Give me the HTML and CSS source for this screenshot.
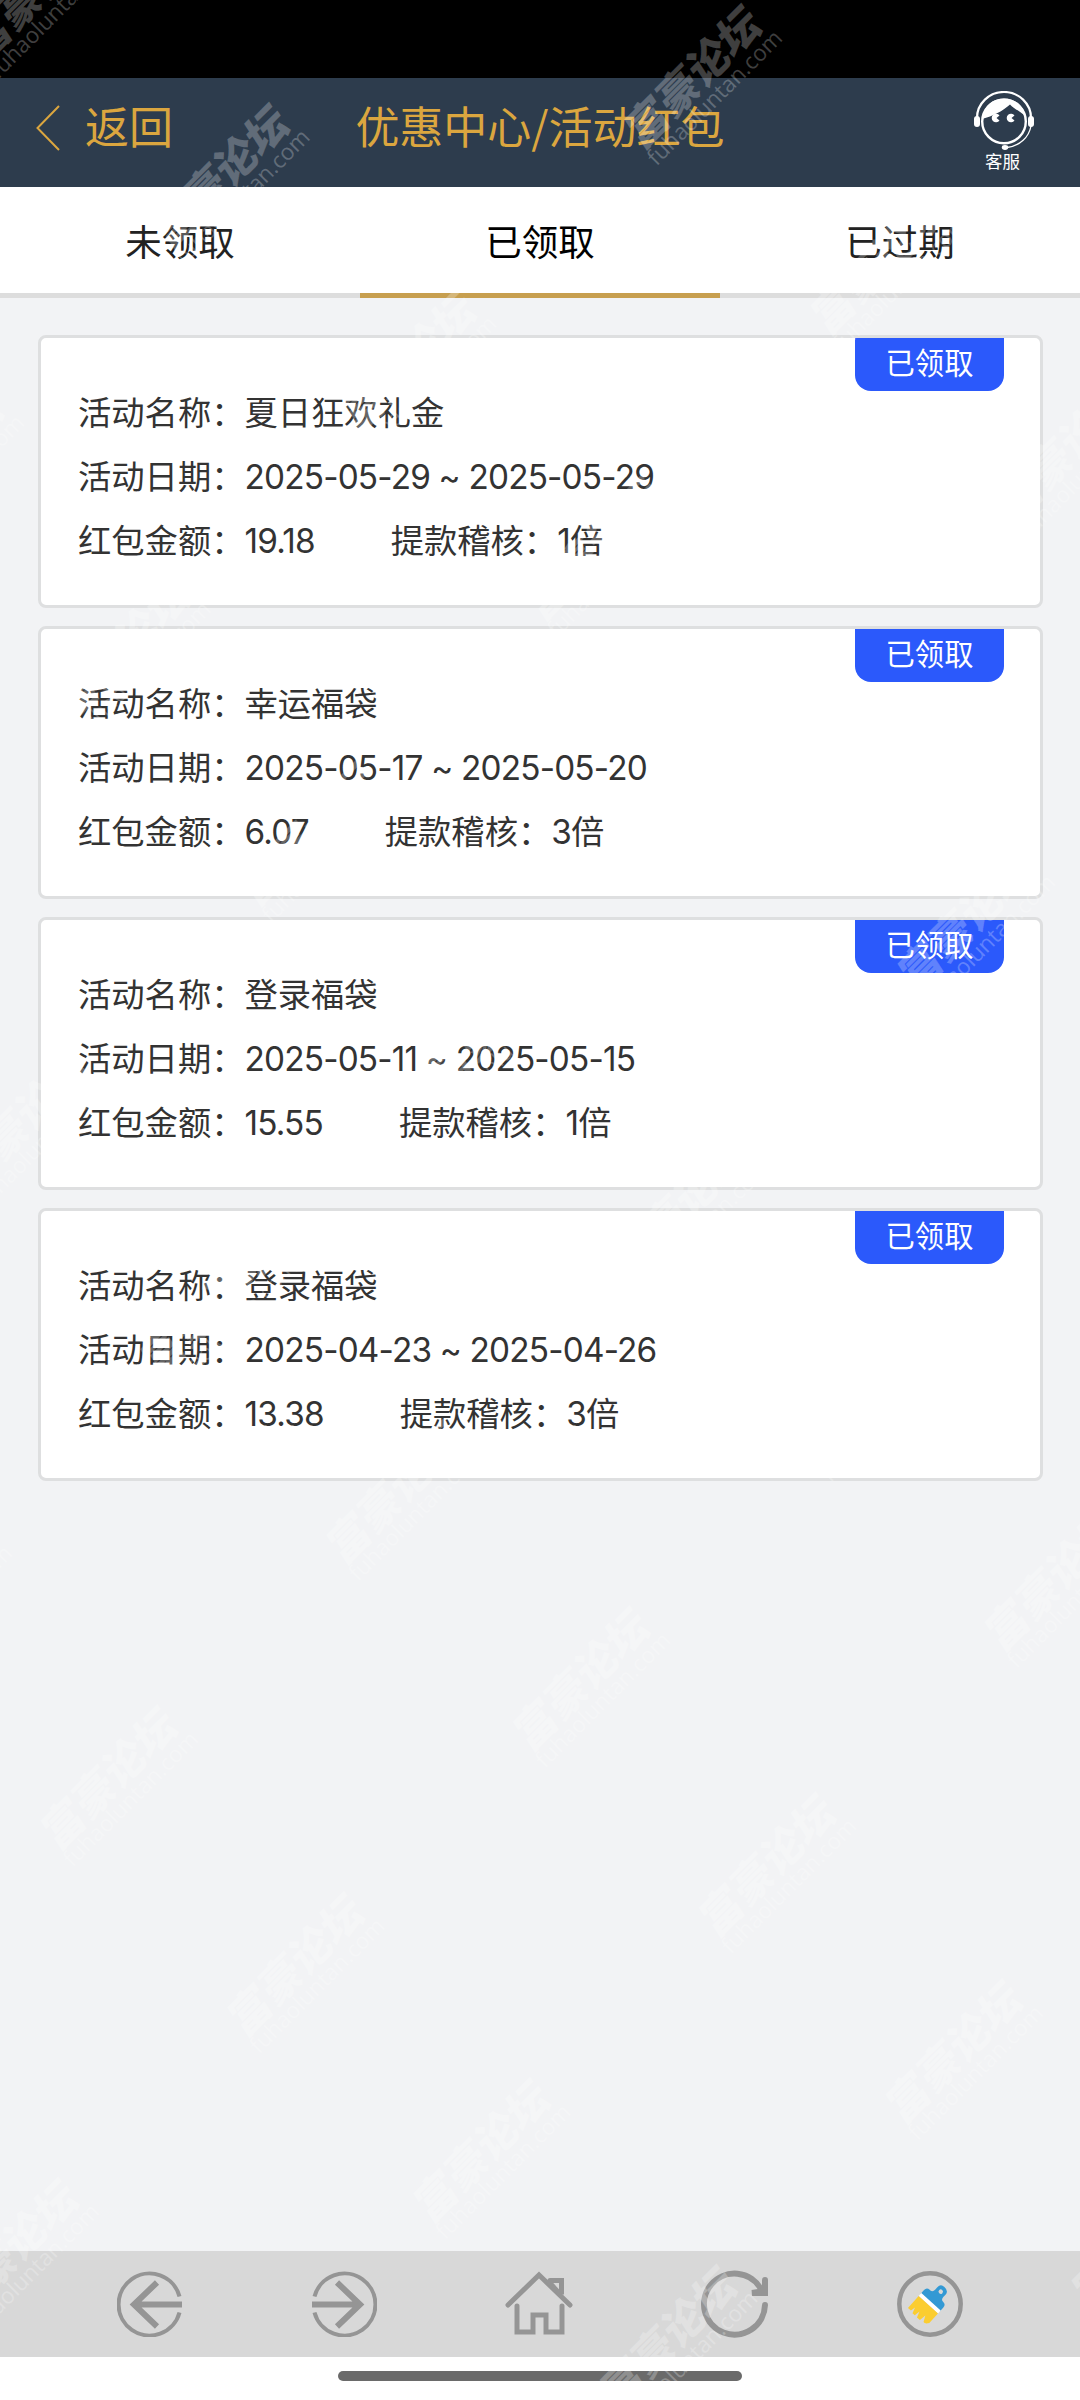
FILE: index.html
```
<!DOCTYPE html>
<html lang="zh-CN">
<head>
    <meta charset="UTF-8">
    <meta name="viewport" content="width=device-width, initial-scale=1.0">
    <title>优惠中心/活动红包</title>
    <link rel="stylesheet" href="styles.css">
</head>
<body>

<div class="status-bar"></div>

<header class="header">
    <a class="back">
        <svg width="24" height="46" viewBox="0 0 24 46"><path d="M23 1 L1.5 23 L23 45" fill="none" stroke="currentColor" stroke-width="2"/></svg>
        <span>返回</span>
    </a>
    <h1>优惠中心/活动红包</h1>
    <a class="service">
        <svg width="60" height="60" viewBox="0 0 60 60">
            <path d="M3 27 A27 26 0 0 1 57 27" fill="none" stroke="#fff" stroke-width="2.2"/>
            <rect x="0" y="25" width="6" height="11" rx="3" fill="#fff"/>
            <rect x="54" y="25" width="6" height="11" rx="3" fill="#fff"/>
            <circle cx="30" cy="30.5" r="21.8" fill="none" stroke="#fff" stroke-width="2.4"/>
            <path d="M8 28 C10 14 19 7.5 30 7.5 C41 7.5 49 14 52 26 C46 20 40 18 36 13.5 C29 20 19 25 8 28 Z" fill="#fff"/>
            <path d="M25.5 24.5 A4.3 4.3 0 1 0 25.5 29.5 L22.5 27 Z" fill="#fff"/>
            <path d="M40.5 24.5 A4.3 4.3 0 1 0 40.5 29.5 L37.5 27 Z" fill="#fff"/>
            <path d="M57 35 C55 46 46 55 33 56.5" fill="none" stroke="#fff" stroke-width="1.3"/>
            <ellipse cx="31" cy="56.5" rx="3.2" ry="2.4" fill="#fff"/>
        </svg>
        <span>客服</span>
    </a>
</header>

<nav class="tabs">
    <a class="tab">未领取</a>
    <a class="tab active">已领取</a>
    <a class="tab">已过期</a>
</nav>

<main class="list" id="list"></main>

<footer class="toolbar">
    <svg width="66" height="66" viewBox="0 0 66 66" fill="none" stroke="#959595">
        <path d="M62.5 25.5 A31 31 0 1 0 62.5 41.5" stroke-width="4"/>
        <path d="M65 33.5 H18 M40 11.5 L17 33.5 L40 55.5" stroke-width="6"/>
    </svg>
    <svg width="66" height="66" viewBox="0 0 66 66" fill="none" stroke="#959595">
        <path d="M3.5 25.5 A31 31 0 1 1 3.5 41.5" stroke-width="4"/>
        <path d="M1 33.5 H48 M26 11.5 L49 33.5 L26 55.5" stroke-width="6"/>
    </svg>
    <svg width="68" height="66" viewBox="0 0 68 66" fill="none" stroke="#959595" stroke-width="5" stroke-linecap="round">
        <path d="M3 34 L34 4 L65 34"/>
        <path d="M12 35 V61 H28 V44 H41 V61 H57 V35"/>
        <path d="M45 9.5 H56.5 V21 H53 L44 11"/>
    </svg>
    <svg width="68" height="68" viewBox="0 0 68 68" fill="none" stroke="#959595" stroke-width="6" stroke-linecap="round">
        <path d="M64 35 A30.5 30.5 0 1 1 60 19"/>
        <path d="M64 10 V23 H51 L64 21"/>
    </svg>
    <svg width="66" height="68" viewBox="0 0 66 68">
        <circle cx="33" cy="34" r="30.7" fill="none" stroke="#959595" stroke-width="4.5"/>
        <g transform="translate(32 34) rotate(42)">
            <path d="M-13 -2 V-7 Q-13 -11 -9 -11 H-8 Q-5 -11 -5 -15 V-18 Q-5 -23 0 -23 Q6 -23 6 -18 V-15 Q6 -11 9 -11 Q13 -11 13 -7 V-2 Z" fill="#3399d4"/>
            <rect x="-13" y="-3" width="26" height="4" fill="#fff"/>
            <path d="M-13 1 H13 V14 Q10 18 8 17 L5 11 L4 18 H0 L-2 12 L-3 18 H-6 L-8 12 L-9 17 H-13 Z" fill="#fbcd30"/>
            <circle cx="0.5" cy="-17" r="2.2" fill="#d8d8d8"/>
        </g>
    </svg>
</footer>

<div class="gesture-bar"><span></span></div>

<div class="watermark"><div class="watermark-grid" id="watermark"></div></div>

<script>
    const records = [
        { name: '夏日狂欢礼金', date: '2025-05-29 ~ 2025-05-29', amount: '19.18', times: '1' },
        { name: '幸运福袋', date: '2025-05-17 ~ 2025-05-20', amount: '6.07', times: '3' },
        { name: '登录福袋', date: '2025-05-11 ~ 2025-05-15', amount: '15.55', times: '1' },
        { name: '登录福袋', date: '2025-04-23 ~ 2025-04-26', amount: '13.38', times: '3' }
    ];

    // Render the red packet cards
    document.getElementById('list').innerHTML = records.map(r => `
        <section class="card">
            <span class="badge">已领取</span>
            <p>活动名称：${r.name}</p>
            <p>活动日期：<span class="num">${r.date}</span></p>
            <p>红包金额：<span class="num amount">${r.amount}</span>提款稽核：<span class="num">${r.times}</span>倍</p>
        </section>`).join('');

    // Fill the diagonal watermark grid, 9 columns x 11 rows
    document.getElementById('watermark').innerHTML =
        '<div class="mark"><b>富豪论坛</b><span>fuhaoluntan.com</span></div>'.repeat(99);
</script>

</body>
</html>
```
FILE: styles.css
```
* {
    box-sizing: border-box;
}

body {
    margin: 0;
    height: 2400px;
    display: flex;
    flex-direction: column;
    position: relative;
    overflow: hidden;
    background-color: #f2f3f5;
    color: #333;
    font-family: Inter, "Noto Sans CJK SC", sans-serif;
}

.status-bar {
    height: 78px;
    background-color: #000;
}

.header {
    height: 109px;
    padding: 0 36px;
    display: grid;
    grid-template-columns: 1fr auto 1fr;
    align-items: center;
    background-color: #2d3c4d;
    color: #dba63f;
    font-family: "Noto Sans CJK SC", sans-serif;
}

.back {
    display: flex;
    align-items: center;
    gap: 25px;
    font-size: 44px;
    line-height: 60px;
    padding-bottom: 10px;
}

.back span {
    padding-bottom: 5px;
}

.header h1 {
    margin: 0;
    padding-bottom: 15px;
    font-size: 44px;
    line-height: 60px;
    font-weight: 400;
}

.service {
    justify-self: end;
    width: 60px;
    margin-right: 10px;
    padding-bottom: 5px;
    display: flex;
    flex-direction: column;
    align-items: center;
    color: #fff;
    font-size: 17.5px;
    line-height: 19px;
}

.service span {
    margin-right: 3px;
}

.tabs {
    height: 111px;
    display: flex;
    background-color: #fff;
    font-size: 36.5px;
    color: #222;
}

.tab {
    flex: 1;
    display: flex;
    align-items: center;
    justify-content: center;
    border-bottom: 5px solid #ddd;
}

.tab.active {
    border-bottom-color: #c79f4f;
    color: #000;
}

.list {
    flex: 1;
    padding: 37px 37px 0 38px;
    display: flex;
    flex-direction: column;
    gap: 18px;
}

.card {
    position: relative;
    height: 273px;
    padding: 43px 37px 0;
    border: 3px solid #dedfe0;
    border-radius: 8px;
    background-color: #fff;
    font-size: 33.3px;
    line-height: 64px;
}

.card p {
    margin: 0;
    white-space: nowrap;
}

.num {
    letter-spacing: -0.8px;
}

.amount {
    margin-right: 76px;
}

.badge {
    position: absolute;
    top: 0;
    right: 36px;
    width: 149px;
    height: 53px;
    border-radius: 0 0 16px 16px;
    background-color: #2b59fb;
    color: #fff;
    font-size: 29.3px;
    line-height: 52px;
    text-align: center;
}

.toolbar {
    height: 106px;
    padding: 0 117px;
    display: flex;
    align-items: center;
    justify-content: space-between;
    background-color: #d8d8d8;
}

.gesture-bar {
    height: 43px;
    padding-top: 14px;
    background-color: #fff;
}

.gesture-bar span {
    display: block;
    width: 404px;
    height: 10px;
    margin: 0 auto;
    border-radius: 5px;
    background-color: #6a6a6a;
}

/* watermark lies over the whole page */
.watermark {
    position: absolute;
    inset: 0;
    overflow: hidden;
    pointer-events: none;
}

.watermark-grid {
    position: absolute;
    left: 692px;
    top: 1212px;
    display: grid;
    grid-template-columns: repeat(9, 404px);
    grid-template-rows: repeat(11, 263.5px);
    transform: translate(-50%, -50%) rotate(-45deg);
    color: rgba(255, 255, 255, 0.25);
}

.mark {
    display: flex;
    flex-direction: column;
    align-items: center;
    justify-content: center;
    padding-right: 8px;
}

.mark b {
    font-size: 43px;
    line-height: 36px;
    font-weight: 900;
    transform: skewX(-12deg);
}

.mark span {
    font-family: "Open Sans", sans-serif;
    font-size: 22.5px;
    line-height: 24px;
}
```
